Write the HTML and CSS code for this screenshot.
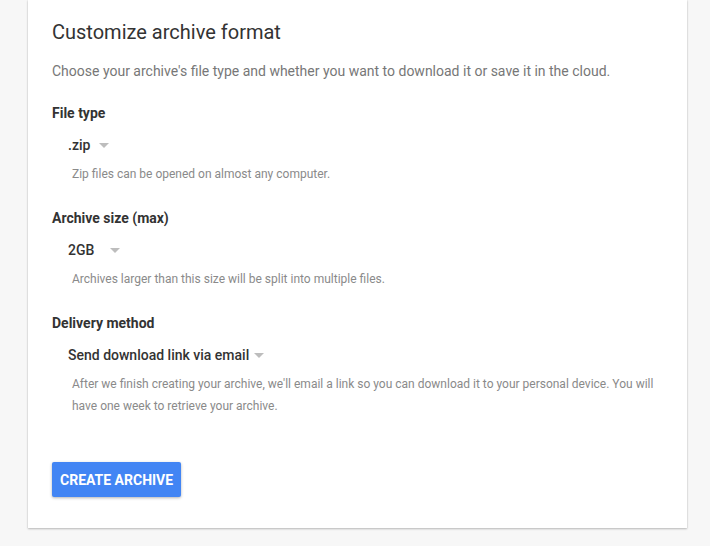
FILE: index.html
```html
<!DOCTYPE html>
<html lang="en">
<head>
<meta charset="utf-8">
<title>Customize archive format</title>
<link rel="stylesheet" href="styles.css">
</head>
<body>
<div class="card">
  <h1 class="title">Customize archive format</h1>
  <p class="desc">Choose your archive's file type and whether you want to download it or save it in the cloud.</p>

  <section class="field">
    <h2 class="label">File type</h2>
    <div class="select">
      <span class="value value-zip">.zip</span>
      <svg class="arrow" width="10" height="5" viewBox="0 0 10 5"><path d="M0 0h10L5 5z"/></svg>
    </div>
    <p class="help">Zip files can be opened on almost any computer.</p>
  </section>

  <section class="field">
    <h2 class="label">Archive size (max)</h2>
    <div class="select">
      <span class="value value-size">2GB</span>
      <svg class="arrow" width="10" height="5" viewBox="0 0 10 5"><path d="M0 0h10L5 5z"/></svg>
    </div>
    <p class="help">Archives larger than this size will be split into multiple files.</p>
  </section>

  <section class="field">
    <h2 class="label">Delivery method</h2>
    <div class="select">
      <span class="value">Send download link via email</span>
      <svg class="arrow" width="10" height="5" viewBox="0 0 10 5"><path d="M0 0h10L5 5z"/></svg>
    </div>
    <p class="help">After we finish creating your archive, we'll email a link so you can download it to your personal device. You will have one week to retrieve your archive.</p>
  </section>

  <button class="btn" type="button">CREATE ARCHIVE</button>
</div>
</body>
</html>
```

FILE: styles.css
```css
html, body {
  margin: 0;
  padding: 0;
}
body {
  background: #f7f7f7;
  font-family: Roboto, "Liberation Sans", Arial, sans-serif;
  height: 546px;
  overflow: hidden;
}
.card {
  background: #fff;
  margin: 0 23px 0 28px;
  padding: 19px 24px 31px 24px;
  box-shadow: 0 1px 2px rgba(0,0,0,0.25), 0 0 1px rgba(0,0,0,0.12);
  display: flex;
  flex-direction: column;
  align-items: flex-start;
}
.title {
  margin: 0;
  font-size: 20px;
  line-height: 26px;
  font-weight: 400;
  color: #333;
}
.desc {
  margin: 16px 0 0 0;
  font-size: 14px;
  line-height: 20px;
  color: #777;
}
.field {
  margin-top: 22px;
  display: flex;
  flex-direction: column;
  align-self: stretch;
}
.field + .field {
  margin-top: 23px;
}
.label {
  margin: 0;
  font-size: 14px;
  line-height: 20px;
  font-weight: 700;
  color: #333;
}
.select {
  margin: 12px 0 0 16px;
  display: flex;
  align-items: center;
  font-size: 14px;
  line-height: 20px;
  font-weight: 500;
  color: #333;
}
.value-zip {
  min-width: 26px;
}
.value-size {
  min-width: 37px;
}
.arrow {
  margin-left: 5px;
  margin-top: 1px;
  fill: #bdbdbd;
}
.help {
  margin: 8px 0 0 20px;
  font-size: 12px;
  line-height: 22px;
  color: #8a8a8a;
}
.btn {
  margin-top: 45px;
  height: 35px;
  padding: 0 8px;
  border: none;
  border-radius: 2px;
  background: #4285f4;
  color: #fff;
  font-family: Roboto, "Liberation Sans", Arial, sans-serif;
  font-size: 14px;
  font-weight: 700;
  box-shadow: 0 1px 3px rgba(0,0,0,0.3);
}
```
